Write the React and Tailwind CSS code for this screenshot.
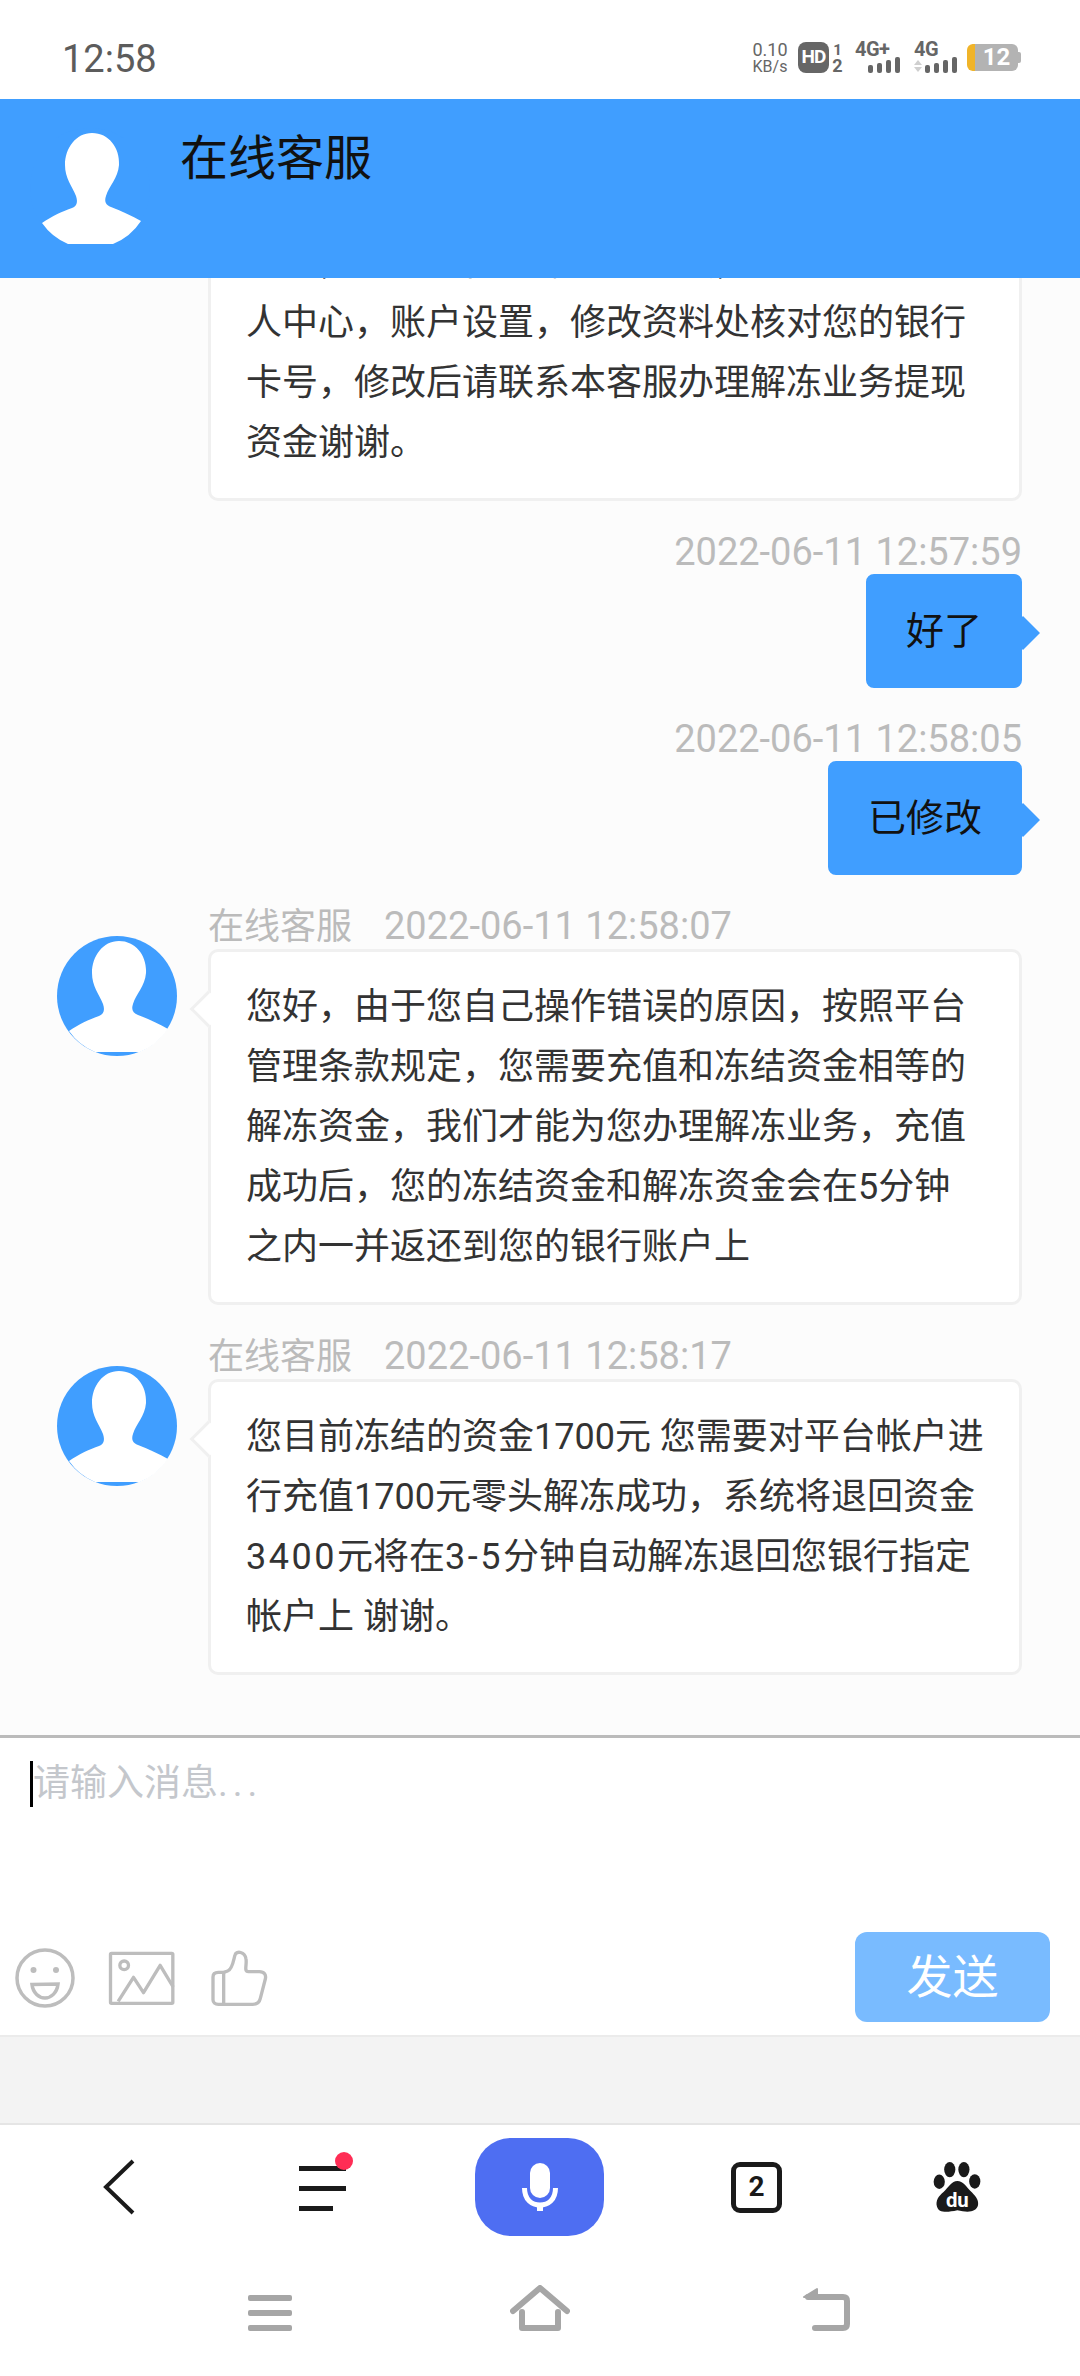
const BLUE = "#409eff";

function Avatar({ className }) {
  return (
    <svg width="120" height="120" viewBox="0 0 120 120" className={className}>
      <circle cx="60" cy="60" r="60" fill="#409eff" />
      <path
        d="M62 5 C79 5 90 20 89 37 C88 50 79 58 76 68 C74 74 76 77 81 79 C92 83 102 88 111 93 A60 60 0 0 1 83 116 L38 116 A60 60 0 0 1 12 95 C22 88 33 83 42 80 C47 78 48 74 46 68 C42 58 35 50 35 37 C35 20 46 5 62 5 Z"
        fill="#fff"
      />
    </svg>
  );
}

function Bars({ arrows }) {
  const heights = ["h-[8px]", "h-[10px]", "h-[13px]", "h-[16px]"];
  return (
    <div className="flex items-end gap-[4px]">
      {arrows && (
        <div className="flex flex-col gap-[2px] mr-[-1px] mb-[1px]">
          <div className="w-0 h-0 border-x-[4px] border-x-transparent border-b-[5px] border-b-[#cfcfcf]" />
          <div className="w-0 h-0 border-x-[4px] border-x-transparent border-t-[5px] border-t-[#cfcfcf]" />
        </div>
      )}
      {heights.map((h) => (
        <div key={h} className={`w-[5px] rounded-[2px] bg-[#666] ${h}`} />
      ))}
    </div>
  );
}

function StatusBar() {
  return (
    <div className="h-[99px] bg-white flex items-center pt-[19px] pl-[62px] pr-[59px] text-[#666] shrink-0">
      <span className="text-[38px] leading-none text-[#5c5c5c]">12:58</span>
      <div className="ml-auto flex items-center mt-[-3px]">
        <div className="w-[38px] text-center leading-none">
          <div className="text-[18px] leading-[18px]">0.10</div>
          <div className="text-[16px] leading-[16px]">KB/s</div>
        </div>
        <div className="ml-[9px] w-[31px] h-[31px] rounded-[8px] bg-[#666] text-white text-[19px] font-bold flex items-center justify-center tracking-[-1px]">
          HD
        </div>
        <div className="ml-[3px] w-[11px] flex flex-col text-center font-bold">
          <span className="text-[15px] leading-[15px]">1</span>
          <span className="text-[18px] leading-[15px]">2</span>
        </div>
        <div className="ml-[12px] w-[45px] flex flex-col">
          <span className="text-[20px] leading-[14px] font-bold tracking-[-0.5px]">4G+</span>
          <div className="self-end mt-[1px]"><Bars /></div>
        </div>
        <div className="ml-[12px] w-[45px] flex flex-col">
          <span className="text-[20px] leading-[14px] font-bold tracking-[-0.5px] ml-[2px]">4G</span>
          <div className="self-end mt-[1px]"><Bars arrows /></div>
        </div>
        <div className="ml-[10px] flex items-center">
          <div className="w-[51px] h-[27px] rounded-[6px] bg-[#b3b3b3] border-l-[8px] border-l-[#f0b429] text-white text-[24px] font-bold leading-[27px] text-center">
            12
          </div>
          <div className="w-[3px] h-[11px] rounded-r-[2px] bg-[#b3b3b3]" />
        </div>
      </div>
    </div>
  );
}

function Card({ lines, pointer }) {
  return (
    <div className="relative w-[814px] bg-white border-[3px] border-[#f0f0f0] rounded-[10px] px-[35px] py-[25px] text-[36px] leading-[60px] text-[#333]">
      {pointer && (
        <div className="absolute left-[-16px] top-[44px] w-[26px] h-[26px] rotate-45 bg-white border-l-[3px] border-b-[3px] border-[#f0f0f0]" />
      )}
      {lines.map((line, i) => (
        <div key={i} className="relative whitespace-nowrap">{line}</div>
      ))}
    </div>
  );
}

function MyMessage({ time, text }) {
  return (
    <div className="flex flex-col items-end mt-[29px]">
      <div className="text-[38px] leading-[44px] text-[#bbb]">{time}</div>
      <div className="relative border-[3px] rounded-[8px] bg-[#409eff] border-[#409eff] px-[37px] py-[24px] text-[38px] leading-[60px] text-[#111]">
        <div className="absolute right-[-16px] top-[44px] w-[24px] h-[24px] rotate-45 bg-[#409eff]" />
        <div className="relative">{text}</div>
      </div>
    </div>
  );
}

function ServiceMessage({ time, lines }) {
  return (
    <div className="flex items-start mt-[29px] ml-[-151px]">
      <Avatar className="mt-[32px] shrink-0" />
      <div className="ml-[31px]">
        <div className="text-[36px] leading-[44px] text-[#bbb]">
          在线客服<span className="ml-[32px] text-[38px]">{time}</span>
        </div>
        <Card lines={lines} pointer />
      </div>
    </div>
  );
}

function SmileIcon() {
  return (
    <svg width="60" height="60" viewBox="0 0 60 60" fill="none" stroke="#bdbdbd" strokeWidth="3.5">
      <circle cx="30" cy="30" r="28" />
      <circle cx="18.5" cy="22" r="3" fill="#bdbdbd" stroke="none" />
      <circle cx="41" cy="22" r="3" fill="#bdbdbd" stroke="none" />
      <path d="M17 36.5 L43 36 C42 45 36 50 30 50 C24 50 18 45 17 36.5 Z" />
    </svg>
  );
}

function ImageIcon() {
  return (
    <svg width="67" height="55" viewBox="322 147 200 165" fill="none" stroke="#bdbdbd" strokeWidth="10">
      <rect x="329" y="154" width="187" height="150" rx="3" />
      <circle cx="370" cy="190" r="13" />
      <path d="M352 298 L398 226 L428 272 L478 190 L517 255" strokeLinejoin="round" />
    </svg>
  );
}

function ThumbIcon() {
  return (
    <svg width="57" height="57" viewBox="630 145 171 171" fill="none" stroke="#bdbdbd" strokeWidth="10" strokeLinejoin="round">
      <path d="M668 212 L680 208 C695 203 698 172 702 160 C706 146 732 150 735 172 C738 190 728 210 742 210 L775 210 C790 210 796 220 793 232 L778 290 C775 303 768 308 755 308 L652 308 C642 308 636 302 636 294 L636 226 C636 216 642 212 652 212 Z" />
      <path d="M668 212 L668 308" />
    </svg>
  );
}

function PawIcon() {
  return (
    <svg width="48" height="52" viewBox="158 125 146 156">
      <g fill="#1a1a1a">
        <ellipse cx="177" cy="187" rx="17" ry="22" />
        <ellipse cx="209" cy="150" rx="17" ry="23" />
        <ellipse cx="252" cy="150" rx="17" ry="23" />
        <ellipse cx="285" cy="186" rx="17" ry="22" />
        <path d="M232 185 C215 185 205 205 190 218 C175 230 165 245 170 262 C175 280 195 282 232 274 C265 282 290 280 295 258 C298 240 285 228 272 215 C258 202 250 185 232 185 Z" />
      </g>
      <text x="232" y="264" textAnchor="middle" fontSize="62" fontWeight="700" fill="#fff" fontFamily="Roboto, sans-serif">du</text>
    </svg>
  );
}

export default function App() {
  return (
    <div className="w-[1080px] h-[2376px] flex flex-col bg-white overflow-hidden [font-family:Roboto,'Noto_Sans_CJK_SC',sans-serif]">
      <StatusBar />

      {/* header */}
      <div className="h-[179px] shrink-0 flex items-start" style={{ backgroundColor: BLUE }}>
        <Avatar className="ml-[30px] mt-[29px]" />
        <div className="ml-[30px] mt-[27px] text-[48px] leading-[66px] text-[#111]">在线客服</div>
      </div>

      {/* messages */}
      <div className="flex-1 min-h-0 overflow-hidden bg-[#fcfcfc] flex flex-col justify-end pl-[208px] pr-[58px] pb-[60px]">
        <Card
          lines={[
            "您好，您的银行卡号填写错误，请您登录平台个",
            "人中心，账户设置，修改资料处核对您的银行",
            "卡号，修改后请联系本客服办理解冻业务提现",
            "资金谢谢。",
          ]}
        />
        <MyMessage time="2022-06-11 12:57:59" text="好了" />
        <MyMessage time="2022-06-11 12:58:05" text="已修改" />
        <ServiceMessage
          time="2022-06-11 12:58:07"
          lines={[
            "您好，由于您自己操作错误的原因，按照平台",
            "管理条款规定，您需要充值和冻结资金相等的",
            "解冻资金，我们才能为您办理解冻业务，充值",
            "成功后，您的冻结资金和解冻资金会在5分钟",
            "之内一并返还到您的银行账户上",
          ]}
        />
        <ServiceMessage
          time="2022-06-11 12:58:17"
          lines={[
            "您目前冻结的资金1700元 您需要对平台帐户进",
            "行充值1700元零头解冻成功，系统将退回资金",
            <>
              <span className="tracking-[2.5px]">3400</span>元将在<span className="tracking-[2.5px]">3-5</span>分钟自动解冻退回您银行指定
            </>,
            "帐户上 谢谢。",
          ]}
        />
      </div>

      {/* input */}
      <div className="h-[302px] shrink-0 border-t-[3px] border-t-[#bbb] border-b-[2px] border-b-[#ebebeb] bg-white flex flex-col justify-between pb-[13px]">
        <div className="flex items-start pl-[30px] pt-[23px]">
          <div className="w-[3px] h-[46px] bg-black" />
          <span className="text-[37px] leading-[46px] text-[#c4c7cc]">
            请输入消息<span className="tracking-[5px]">...</span>
          </span>
        </div>
        <div className="flex items-center pl-[15px] pr-[30px]">
          <div className="flex items-center mt-[2px]">
            <SmileIcon />
            <div className="ml-[33px]"><ImageIcon /></div>
            <div className="ml-[36px]"><ThumbIcon /></div>
          </div>
          <div className="ml-auto w-[195px] h-[90px] rounded-[12px] bg-[#79bbff] flex items-center justify-center text-white text-[46px]">
            发送
          </div>
        </div>
      </div>

      <div className="h-[88px] shrink-0 bg-[#f3f3f3] border-b-[2px] border-b-[#e5e5e5]" />

      {/* browser bar */}
      <div className="h-[124px] shrink-0 flex items-center bg-white">
        <svg width="32" height="56" viewBox="0 0 32 56" fill="none" stroke="#1a1a1a" strokeWidth="4" className="ml-[103px]">
          <path d="M30 2 L3 28 L30 54" />
        </svg>
        <div className="relative ml-[164px] w-[47px] h-[45px] flex flex-col justify-between mb-[-3px]">
          <div className="h-[5px] w-[47px] bg-[#1a1a1a]" />
          <div className="h-[5px] w-[47px] bg-[#1a1a1a]" />
          <div className="h-[5px] w-[34px] bg-[#1a1a1a]" />
          <div className="absolute right-[-7px] top-[-14px] w-[18px] h-[18px] rounded-full bg-[#ff2d55]" />
        </div>
        <div className="ml-[129px] w-[129px] h-[98px] rounded-[36px] bg-[#4e6ef2] flex items-center justify-center">
          <svg width="36" height="50" viewBox="0 0 36 50" fill="none">
            <rect x="8" y="1" width="20" height="35" rx="10" fill="#fff" />
            <path d="M2.5 26 C2.5 38 10 43 18 43 C26 43 33.5 38 33.5 26" stroke="#fff" strokeWidth="5" />
            <path d="M18 42 L18 49" stroke="#fff" strokeWidth="6" />
          </svg>
        </div>
        <div className="ml-[127px] w-[51px] h-[51px] rounded-[9px] border-[5px] border-[#1a1a1a] flex items-center justify-center text-[28px] leading-none font-bold text-[#1a1a1a]">
          2
        </div>
        <div className="ml-[151px]"><PawIcon /></div>
      </div>

      {/* system nav */}
      <div className="h-[127px] shrink-0 flex items-end pb-[45px] bg-white">
        <div className="ml-[248px] w-[44px] h-[36px] flex flex-col justify-between">
          <div className="h-[6px] rounded-[2px] bg-[#a6a6a6]" />
          <div className="h-[6px] rounded-[2px] bg-[#a6a6a6]" />
          <div className="h-[6px] rounded-[2px] bg-[#a6a6a6]" />
        </div>
        <svg width="60" height="46" viewBox="0 0 60 46" fill="none" stroke="#a6a6a6" strokeWidth="6" strokeLinecap="round" strokeLinejoin="round" className="ml-[218px]">
          <path d="M3 26 L30 3 L57 26" />
          <path d="M12 27 L12 43 L48 43 L48 27" />
        </svg>
        <svg width="50" height="44" viewBox="0 0 50 44" fill="none" stroke="#a6a6a6" strokeWidth="6" strokeLinecap="round" strokeLinejoin="round" className="ml-[231px]">
          <path d="M7 10 L42 10 Q46 10 46 14 L46 37 Q46 41 42 41 L14 41" />
          <path d="M3 10 L16 2 L16 10 Z" fill="#a6a6a6" stroke="#a6a6a6" strokeWidth="2" />
        </svg>
      </div>
    </div>
  );
}
